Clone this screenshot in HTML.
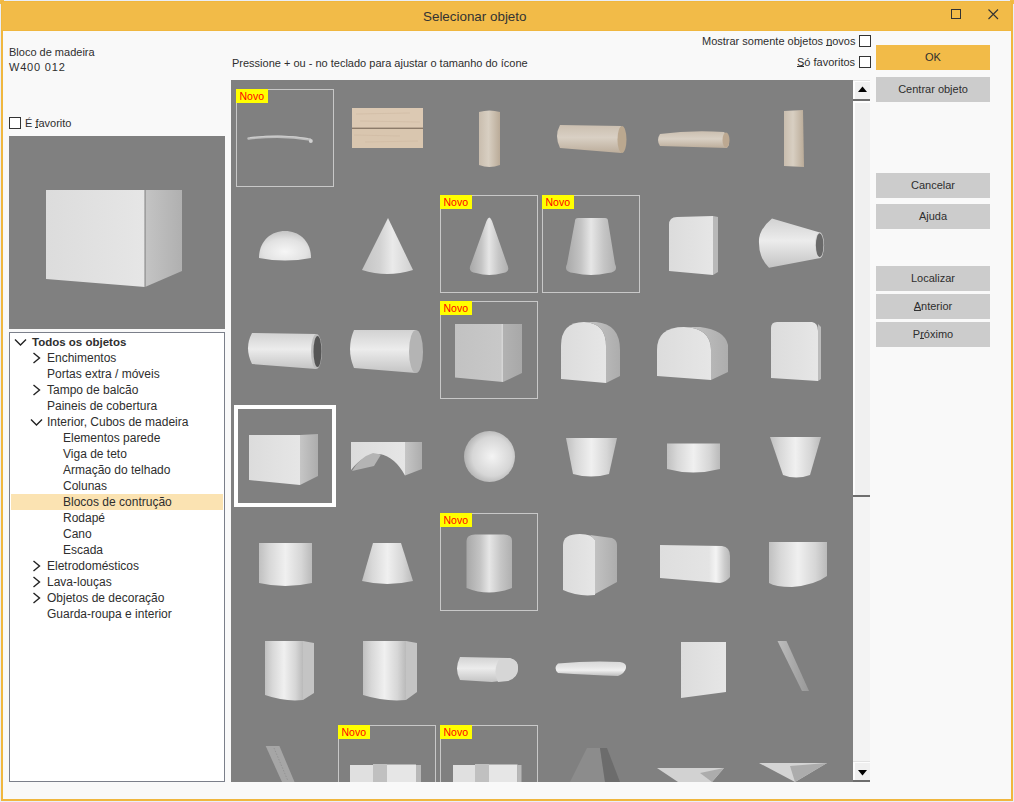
<!DOCTYPE html>
<html><head><meta charset="utf-8">
<style>
html,body{margin:0;padding:0;}
body{width:1014px;height:802px;position:relative;overflow:hidden;background:#e9eef8;font-family:"Liberation Sans",sans-serif;color:#2e2e2e;}
.a{position:absolute;}
.t{position:absolute;font-size:11px;line-height:11px;white-space:pre;}
.btn{position:absolute;left:876px;width:114px;height:25px;background:#cccccc;font-size:11px;line-height:25px;text-align:center;color:#2e2e2e;}
.cb{position:absolute;width:10px;height:10px;border:1px solid #333;background:#fff;}
.u{position:relative;}
.u::after{content:"";position:absolute;left:0;right:0;bottom:1px;height:1px;background:#333;}
.tr{position:absolute;font-size:12px;line-height:16px;height:16px;white-space:pre;}
</style></head><body>
<div class="a" style="left:1px;top:1px;width:1012px;height:800px;background:#f0b73f;"></div>
<div class="a" style="left:2px;top:2px;width:1009px;height:28px;background:#f2bb48;"></div>
<div class="a" style="left:0;top:0;width:4px;height:1px;background:#f2bb48;"></div>
<div class="a" style="left:0;top:0;width:1px;height:4px;background:#f2bb48;"></div>
<div class="a" style="left:1010px;top:0;width:4px;height:1px;background:#f2bb48;"></div>
<div class="a" style="left:1013px;top:0;width:1px;height:4px;background:#f2bb48;"></div>
<div class="a" style="left:3px;top:31px;width:1008px;height:768px;background:#f9f9f9;"></div>
<div class="t" style="left:423px;top:10px;font-size:13.4px;line-height:13px;color:#333;">Selecionar objeto</div>
<svg class="a" style="left:0;top:0" width="1014" height="30">
<rect x="951.5" y="9.5" width="9" height="9" fill="none" stroke="#333" stroke-width="1"/>
<path d="M988.5,9.5 L998,19 M998,9.5 L988.5,19" stroke="#333" stroke-width="1.1" fill="none"/>
</svg>

<!-- left info -->
<div class="t" style="left:9px;top:47px;">Bloco de madeira</div>
<div class="t" style="left:9px;top:62px;letter-spacing:0.8px;">W400 012</div>
<div class="cb" style="left:9px;top:117px;"></div>
<div class="t" style="left:25px;top:118px;">É <span class="u">f</span>avorito</div>

<!-- preview -->
<div class="a" style="left:9px;top:136px;width:216px;height:193px;background:#808080;"></div>
<svg class="a" style="left:0;top:0" width="240" height="340">
<defs>
<linearGradient id="pf" x1="0" y1="0" x2="1" y2="0"><stop offset="0" stop-color="#dcdcdc"/><stop offset="1" stop-color="#e6e6e6"/></linearGradient>
<linearGradient id="ps" x1="0" y1="0" x2="1" y2="0"><stop offset="0" stop-color="#c4c4c4"/><stop offset="1" stop-color="#b0b0b0"/></linearGradient>
</defs>
<polygon points="46,190 145,190 145,287 46,279" fill="url(#pf)"/>
<polygon points="145,190 182,190 182,271 145,287" fill="url(#ps)"/>
<line x1="145" y1="190" x2="145" y2="287" stroke="#6a6a6a" stroke-width="0.8"/>
</svg>

<!-- tree -->
<div class="a" style="left:9px;top:332px;width:214px;height:448px;border:1px solid #7b7f8a;background:#fff;"></div>
<div class="a" style="left:11px;top:494px;width:212px;height:16px;background:#fbe3b2;"></div>
<svg class="a" style="left:0;top:330px" width="240" height="300">
<g fill="none" stroke="#222" stroke-width="1.4">
<path d="M15,9.5 L20.5,15 L26,9.5"/>
<path d="M33.5,23 L39.5,28 L33.5,33"/>
<path d="M33.5,55 L39.5,60 L33.5,65"/>
<path d="M31,89.5 L36.5,95 L42,89.5"/>
<path d="M33.5,231 L39.5,236 L33.5,241"/>
<path d="M33.5,247 L39.5,252 L33.5,257"/>
<path d="M33.5,263 L39.5,268 L33.5,273"/>
</g>
</svg>
<div class="tr" style="left:32px;top:334px;font-weight:bold;font-size:11.5px;">Todos os objetos</div>
<div class="tr" style="left:47px;top:350px;">Enchimentos</div>
<div class="tr" style="left:47px;top:366px;">Portas extra / móveis</div>
<div class="tr" style="left:47px;top:382px;">Tampo de balcão</div>
<div class="tr" style="left:47px;top:398px;">Paineis de cobertura</div>
<div class="tr" style="left:47px;top:414px;">Interior, Cubos de madeira</div>
<div class="tr" style="left:63px;top:430px;">Elementos parede</div>
<div class="tr" style="left:63px;top:446px;">Viga de teto</div>
<div class="tr" style="left:63px;top:462px;">Armação do telhado</div>
<div class="tr" style="left:63px;top:478px;">Colunas</div>
<div class="tr" style="left:63px;top:494px;">Blocos de contrução</div>
<div class="tr" style="left:63px;top:510px;">Rodapé</div>
<div class="tr" style="left:63px;top:526px;">Cano</div>
<div class="tr" style="left:63px;top:542px;">Escada</div>
<div class="tr" style="left:47px;top:558px;">Eletrodomésticos</div>
<div class="tr" style="left:47px;top:574px;">Lava-louças</div>
<div class="tr" style="left:47px;top:590px;">Objetos de decoração</div>
<div class="tr" style="left:47px;top:606px;">Guarda-roupa e interior</div>

<!-- top texts -->
<div class="t" style="left:232px;top:58px;">Pressione + ou - no teclado para ajustar o tamanho do ícone</div>
<div class="t" style="left:702px;top:36px;">Mostrar somente objetos <span class="u">n</span>ovos</div>
<div class="cb" style="left:859px;top:35px;"></div>
<div class="t" style="left:797px;top:57px;"><span class="u">S</span>ó favoritos</div>
<div class="cb" style="left:859px;top:56px;"></div>

<!-- buttons -->
<div class="btn" style="top:45px;background:#f2bb48;">OK</div>
<div class="btn" style="top:77px;">Centrar objeto</div>
<div class="btn" style="top:173px;">Cancelar</div>
<div class="btn" style="top:204px;">Ajuda</div>
<div class="btn" style="top:266px;">Localizar</div>
<div class="btn" style="top:294px;"><span class="u">A</span>nterior</div>
<div class="btn" style="top:322px;">P<span class="u">r</span>óximo</div>

<!-- scrollbar -->
<div class="a" style="left:853px;top:80px;width:17px;height:702px;background:#f3f3f3;"></div>
<div class="a" style="left:853px;top:80px;width:17px;height:1px;background:#e2e2e2;"></div>
<div class="a" style="left:853px;top:81px;width:17px;height:18px;background:#fdfdfd;"></div>
<div class="a" style="left:855px;top:82px;width:15px;height:17px;background:#f0f0f0;"></div>
<div class="a" style="left:853px;top:99px;width:17px;height:2px;background:#6e6e6e;"></div>
<div class="a" style="left:853px;top:101px;width:17px;height:396px;background:#fdfdfd;"></div>
<div class="a" style="left:855px;top:103px;width:15px;height:392px;background:#f0f0f0;"></div>
<div class="a" style="left:853px;top:495px;width:17px;height:2px;background:#6e6e6e;"></div>
<div class="a" style="left:853px;top:761px;width:17px;height:1px;background:#e2e2e2;"></div>
<div class="a" style="left:853px;top:762px;width:17px;height:18px;background:#fdfdfd;"></div>
<div class="a" style="left:855px;top:763px;width:15px;height:17px;background:#f0f0f0;"></div>
<div class="a" style="left:853px;top:780px;width:17px;height:2px;background:#6e6e6e;"></div>
<svg class="a" style="left:0;top:0" width="1014" height="802">
<polygon points="858,92 867,92 862.5,86.5" fill="#000"/>
<polygon points="858,770 867,770 862.5,775.5" fill="#000"/>
</svg>

<!-- grid -->
<div class="a" style="left:231px;top:80px;width:622px;height:702px;background:#808080;overflow:hidden;">
<svg width="622" height="702" style="position:absolute;left:0;top:0">
<defs>
<linearGradient id="cv" x1="0" y1="0" x2="1" y2="0"><stop offset="0" stop-color="#c0c0c0"/><stop offset="0.2" stop-color="#d8d8d8"/><stop offset="0.5" stop-color="#f0f0f0"/><stop offset="0.8" stop-color="#d6d6d6"/><stop offset="1" stop-color="#bababa"/></linearGradient>
<linearGradient id="cv2" x1="0" y1="0" x2="1" y2="0"><stop offset="0" stop-color="#a8a8a8"/><stop offset="0.3" stop-color="#c4c4c4"/><stop offset="0.5" stop-color="#e6e6e6"/><stop offset="0.75" stop-color="#c6c6c6"/><stop offset="1" stop-color="#b0b0b0"/></linearGradient>
<linearGradient id="ch" x1="0" y1="0" x2="0" y2="1"><stop offset="0" stop-color="#d2d2d2"/><stop offset="0.45" stop-color="#ececec"/><stop offset="1" stop-color="#c4c4c4"/></linearGradient>
<linearGradient id="fr" x1="0" y1="0" x2="1" y2="0"><stop offset="0" stop-color="#dcdcdc"/><stop offset="1" stop-color="#e6e6e6"/></linearGradient>
<linearGradient id="fr2" x1="0" y1="0" x2="1" y2="0"><stop offset="0" stop-color="#c2c2c2"/><stop offset="0.95" stop-color="#c8c8c8"/><stop offset="1" stop-color="#dadada"/></linearGradient>
<linearGradient id="sd" x1="0" y1="0" x2="1" y2="0"><stop offset="0" stop-color="#c6c6c6"/><stop offset="1" stop-color="#adadad"/></linearGradient>
<linearGradient id="sd2" x1="0" y1="0" x2="1" y2="0"><stop offset="0" stop-color="#b2b2b2"/><stop offset="1" stop-color="#a8a8a8"/></linearGradient>
<radialGradient id="sp" cx="0.55" cy="0.5" r="0.55"><stop offset="0" stop-color="#f4f4f4"/><stop offset="0.7" stop-color="#d6d6d6"/><stop offset="1" stop-color="#b2b2b2"/></radialGradient>
<radialGradient id="hs" cx="0.5" cy="0.7" r="0.7"><stop offset="0" stop-color="#f6f6f6"/><stop offset="0.6" stop-color="#e2e2e2"/><stop offset="1" stop-color="#c4c4c4"/></radialGradient>
<linearGradient id="wv" x1="0" y1="0" x2="1" y2="0"><stop offset="0" stop-color="#c9bdae"/><stop offset="0.45" stop-color="#d8cfc2"/><stop offset="1" stop-color="#baab98"/></linearGradient>
<linearGradient id="wh" x1="0" y1="0" x2="0" y2="1"><stop offset="0" stop-color="#cbbfb0"/><stop offset="0.45" stop-color="#d9d0c4"/><stop offset="1" stop-color="#bcad9b"/></linearGradient>
<linearGradient id="rb" x1="0" y1="0" x2="1" y2="0"><stop offset="0" stop-color="#dedede"/><stop offset="0.7" stop-color="#e4e4e4"/><stop offset="0.8" stop-color="#f4f4f4"/><stop offset="0.92" stop-color="#cccccc"/><stop offset="1" stop-color="#b8b8b8"/></linearGradient>
<linearGradient id="rod" x1="0" y1="0" x2="1" y2="0"><stop offset="0" stop-color="#bdbdbd"/><stop offset="0.6" stop-color="#a6a6a6"/><stop offset="1" stop-color="#999"/></linearGradient>
<linearGradient id="slab" x1="0" y1="0" x2="0" y2="1"><stop offset="0" stop-color="#d8d8d8"/><stop offset="0.35" stop-color="#e4e4e4"/><stop offset="0.6" stop-color="#f0f0f0"/><stop offset="1" stop-color="#bdbdbd"/></linearGradient>
<linearGradient id="cn" x1="0" y1="0" x2="1" y2="0"><stop offset="0" stop-color="#c4c4c4"/><stop offset="0.35" stop-color="#d2d2d2"/><stop offset="0.6" stop-color="#eaeaea"/><stop offset="1" stop-color="#d0d0d0"/></linearGradient>
</defs>
<g transform="translate(-231,-80)">
<!-- row 0 -->
<path d="M248.5,138.5 Q282,134.5 310,139.5" stroke="#bdbdbd" stroke-width="2.4" fill="none" stroke-linecap="round"/>
<path d="M250,137.6 Q282,134 308,138.6" stroke="#d2d2d2" stroke-width="0.8" fill="none"/>
<circle cx="310.8" cy="141" r="2" fill="#d0d0d0"/>
<rect x="352" y="108" width="71" height="20" fill="#dcc9b3"/>
<rect x="352" y="129" width="71" height="19" fill="#d9c6af"/>
<g stroke="#cfb9a2" stroke-width="0.7" opacity="0.8"><path d="M356,114 L410,113 M360,121 L420,122 M354,135 L400,136 M365,142 L418,141"/></g>
<rect x="352" y="127.6" width="71" height="1.4" fill="#8c7b6a"/>
<path d="M479,112 Q489.5,109 500,112 L500,165 Q489.5,169 479,165 Z" fill="url(#wv)"/>
<path d="M560,125 L621,126 Q627,139 621,153 L560,148 Q554,136 560,125 Z" fill="url(#wh)"/>
<ellipse cx="622" cy="139.5" rx="4.5" ry="13.5" fill="#bba88f"/>
<path d="M660,134 Q690,130 724,132 Q730,137 729,145 L727,148 L660,146 Q656,140 660,134 Z" fill="url(#wh)"/>
<ellipse cx="726" cy="140" rx="3.5" ry="7.5" fill="#bca891"/>
<polygon points="784,111 803,110 804,167 784,166" fill="url(#wv)"/>
<!-- row 1 -->
<path d="M259,258 C259,241 271,231 285,231 C299,231 311,241 311,258 Q285,263 259,258 Z" fill="url(#hs)"/>
<path d="M388,218 L362,270 Q387,278 413,270 Z" fill="url(#cn)"/>
<path d="M486.5,221 Q489.3,214 492,221 L507,264 Q511,272 503,273 Q489,277 476,273 Q467,272 471,264 Z" fill="url(#cv2)"/>
<path d="M578,218 L605,218 Q608,218 608,221 L615,264 Q619,272 608,273 Q591,277 574,273 Q563,272 567,264 L575,221 Q575,218 578,218 Z" fill="url(#cv2)"/>
<path d="M669,225 Q669,217 677,217 L713,216 L713,275 L669,271 Z" fill="url(#fr)"/>
<polygon points="713,216 718,217 718,272 713,275" fill="#b8b8b8"/>
<path d="M772,218.5 Q758,230 759,243 Q759,258 769,267.7 L819,258.2 L819,232.3 Z" fill="url(#ch)"/>
<ellipse cx="819.5" cy="245.3" rx="4.6" ry="13" fill="#d8d8d8"/>
<ellipse cx="819.7" cy="245.3" rx="3.8" ry="12" fill="#6a6a6a"/>
<!-- row 2 -->
<path d="M252,333 L316,334 L316,369 L252,364 Q244,348 252,333 Z" fill="url(#ch)"/>
<ellipse cx="316.5" cy="351.5" rx="5.5" ry="17.5" fill="#bcbcbc"/>
<ellipse cx="317.5" cy="351.5" rx="4" ry="15.5" fill="#555"/>
<path d="M354,330 L416,330 L416,373 L354,368 Q346,349 354,330 Z" fill="url(#ch)"/>
<ellipse cx="416" cy="351.5" rx="7" ry="21.5" fill="#b4b4b4"/>
<polygon points="455,324 503,324 503,382 455,377.5" fill="url(#fr2)"/>
<polygon points="503,324 522,324 522,373 503,382" fill="url(#sd2)"/>
<path d="M561,379 L561,346 Q561,322 584,322 Q606,323 606,346 L606,383 Z" fill="url(#fr)"/>
<path d="M584,322 L596,322 Q620,324 620,350 L620,376 L606,383 L606,346 Q606,323 584,322 Z" fill="url(#sd)"/>
<path d="M657,376 L657,350 Q657,327 684,327 Q711,328 711,350 L711,380 Z" fill="url(#fr)"/>
<path d="M684,327 L700,327 Q725,330 728,345 L728,372 L711,380 L711,350 Q711,328 684,327 Z" fill="url(#sd)"/>
<path d="M771,378 L771,328 Q771,322 777,322 L812,322 Q818,323 818,331 L818,381 Z" fill="url(#fr)"/>
<polygon points="818,324 821,327 821,379 818,381" fill="#bcbcbc"/>
<!-- row 3 -->
<rect x="236" y="407" width="98" height="98" fill="none" stroke="#ffffff" stroke-width="4"/>
<polygon points="249,435 300,435 300,485 249,480" fill="url(#fr)"/>
<polygon points="300,435 318,434 318,476 300,485" fill="url(#sd)"/>
<path d="M351,442 L405,442 L405,475.5 Q395,457 380,454 Q362,455 351,470 Z" fill="url(#fr)"/>
<path d="M352,471 Q360,457 373,453 L381,454.5 L374,466 Z" fill="#b4b4b4"/>
<polygon points="405,442 422,442 422,469 405,475.5" fill="url(#sd)"/>
<circle cx="489.5" cy="456.5" r="25.5" fill="url(#sp)"/>
<path d="M566,438 L617,438 L609,474 Q591,479 573,474 Z" fill="url(#cv)"/>
<path d="M667,443.5 L720,443.5 L720,469 Q693,476 667,469 Z" fill="url(#cv)"/>
<path d="M770,437 L821,437 L810,475 Q796,480 783,475 Z" fill="url(#cv)"/>
<!-- row 4 -->
<path d="M259,543 L312,543 L312,583 Q285,589 259,583 Z" fill="url(#cv)"/>
<path d="M373,543 L401,543 L413,581 Q387,587 362,581 Z" fill="url(#cv)"/>
<path d="M466.5,541 Q466.5,534.5 475,534.5 L504,534.5 Q512,534.5 512,541 L512,588 Q489,597 466.5,588 Z" fill="url(#cv2)"/>
<path d="M563,545 Q563,534 580,534 Q592,534 595,540 L595,595 Q578,597 563,590 Z" fill="url(#fr)"/>
<path d="M590,535 L612,538 Q617,540 617,545 L617,582 L595,594 L595,540 Z" fill="url(#sd)"/>
<path d="M660,545 L722,546 Q730,547 730,556 L730,577 Q726,582 720,583 L660,578 Z" fill="url(#rb)"/>
<path d="M769,542 L827,542 L827,576 Q815,585 792,587 Q775,587 769,583 Z" fill="url(#cv)"/>
<!-- row 5 -->
<path d="M265,641 L303,641 L303,700 Q285,702 265,695 Z" fill="url(#cv)"/>
<polygon points="303,641 314,643 314,693 303,700" fill="#c4c4c4"/>
<path d="M363,641 L406,641 L406,700 Q385,702 363,695 Z" fill="url(#cv)"/>
<polygon points="406,641 417,643 417,692 406,700" fill="#c4c4c4"/>
<path d="M460,657 L508,658 Q518,659 518,668 Q518,677 508,680 L492,682 L460,680 Q454,669 460,657 Z" fill="url(#ch)"/>
<path d="M500,658 L510,658 Q518,660 518,668 Q518,678 508,681 L498,682 Q492,670 500,658 Z" fill="#d6d6d6"/>
<path d="M558,663.5 Q590,660.5 620,662 Q627,663 626,668 Q625,673 618,676 Q590,675 558,673 Q553,668 558,663.5 Z" fill="url(#slab)"/>
<polygon points="681,642 726,642 726,692 681,698" fill="url(#fr)"/>
<polygon points="777.5,641 786.5,641 809,691 802,691" fill="url(#rod)"/>
<!-- row 6 -->
<polygon points="265.7,746 279.4,746 294.5,782 282,782" fill="#a6a6a6"/>
<path d="M274,748 L288,781" stroke="#8e8e8e" stroke-width="0.8" stroke-dasharray="1.5,1.5"/>
<rect x="350" y="765" width="23" height="17" fill="#e0e0e0"/>
<rect x="373" y="764" width="14" height="18" fill="#c0c0c0"/>
<rect x="387" y="764.5" width="29" height="17.5" fill="#e6e6e6"/>
<rect x="416" y="765" width="5" height="17" fill="#b8b8b8"/>
<rect x="453" y="765" width="22" height="17" fill="#e0e0e0"/>
<rect x="475" y="764" width="14" height="18" fill="#c0c0c0"/>
<rect x="489" y="764.5" width="28.5" height="17.5" fill="#e6e6e6"/>
<rect x="517.5" y="765" width="4" height="17" fill="#b8b8b8"/>
<polygon points="587,748 600,748 605,782 570,782" fill="#8c8c8c"/>
<polygon points="600,748 607,748 620,782 605,782" fill="#6c6c6c"/>
<polygon points="657,768 724,768 712,782 678,782" fill="#d2d2d2"/>
<polygon points="700,773 724,768 712,782" fill="#acacac"/>
<polygon points="759,763 827,763 795,782" fill="#d4d4d4"/>
<polygon points="790,766 827,763 795,782" fill="#acacac"/>
<!-- novo boxes -->
<rect x="236.5" y="89.5" width="97" height="97" fill="none" stroke="#c8c8c8" stroke-width="1"/><rect x="236" y="89" width="32" height="14" fill="#ffff00"/><text x="239.5" y="100" font-family="Liberation Sans" font-size="10.5" fill="#ff0000">Novo</text>
<rect x="440.5" y="195.5" width="97" height="97" fill="none" stroke="#c8c8c8" stroke-width="1"/><rect x="440" y="195" width="32" height="14" fill="#ffff00"/><text x="443.5" y="206" font-family="Liberation Sans" font-size="10.5" fill="#ff0000">Novo</text>
<rect x="542.5" y="195.5" width="97" height="97" fill="none" stroke="#c8c8c8" stroke-width="1"/><rect x="542" y="195" width="32" height="14" fill="#ffff00"/><text x="545.5" y="206" font-family="Liberation Sans" font-size="10.5" fill="#ff0000">Novo</text>
<rect x="440.5" y="301.5" width="97" height="97" fill="none" stroke="#c8c8c8" stroke-width="1"/><rect x="440" y="301" width="32" height="14" fill="#ffff00"/><text x="443.5" y="312" font-family="Liberation Sans" font-size="10.5" fill="#ff0000">Novo</text>
<rect x="440.5" y="513.5" width="97" height="97" fill="none" stroke="#c8c8c8" stroke-width="1"/><rect x="440" y="513" width="32" height="14" fill="#ffff00"/><text x="443.5" y="524" font-family="Liberation Sans" font-size="10.5" fill="#ff0000">Novo</text>
<rect x="338.5" y="725.5" width="97" height="97" fill="none" stroke="#c8c8c8" stroke-width="1"/><rect x="338" y="725" width="32" height="14" fill="#ffff00"/><text x="341.5" y="736" font-family="Liberation Sans" font-size="10.5" fill="#ff0000">Novo</text>
<rect x="440.5" y="725.5" width="97" height="97" fill="none" stroke="#c8c8c8" stroke-width="1"/><rect x="440" y="725" width="32" height="14" fill="#ffff00"/><text x="443.5" y="736" font-family="Liberation Sans" font-size="10.5" fill="#ff0000">Novo</text>

</g>
</svg>

</div>
</body></html>
